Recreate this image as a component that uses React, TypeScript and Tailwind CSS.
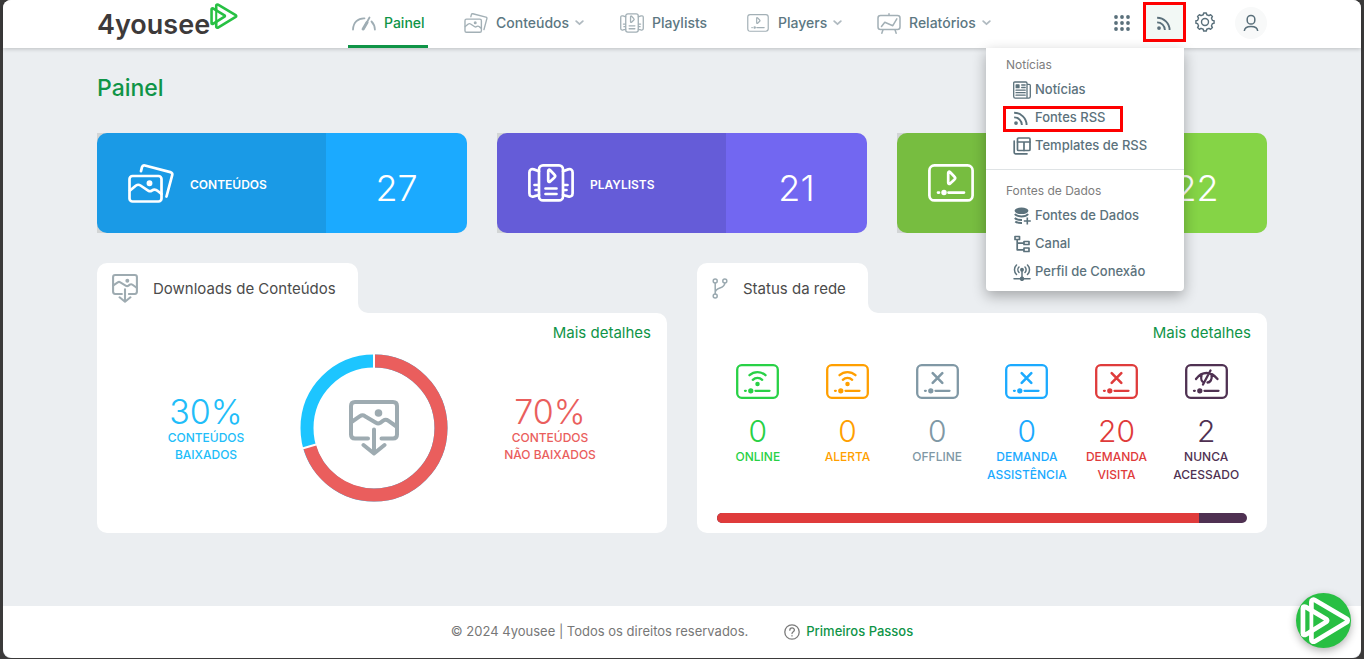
import type { ReactNode } from 'react';

type IconProps = { className?: string };

const stroke = {
  fill: 'none',
  stroke: 'currentColor',
  strokeLinecap: 'round' as const,
  strokeLinejoin: 'round' as const,
};

function PlayMark({ className }: IconProps) {
  return (
    <svg viewBox="0 0 54 50" className={className} {...stroke} strokeWidth={5} aria-hidden="true">
      <path d="M12 12.500V5c0-2 2-2.600 3.500-1.800L49.500 23.100c1.500 1 1.500 2.700 0 3.700L15.500 47.300C14 48.100 12 47.500 12 45.500V37" />
      <path d="M3 11.800v27c0 1.500 1.500 2 2.800 1.300L28 26.300c1-.7 1-1.900 0-2.600L5.800 10.500C4.500 9.800 3 10.300 3 11.800z" />
      <path d="M12 14V36" strokeWidth={4} />
    </svg>
  );
}

function GaugeIcon({ className }: IconProps) {
  return (
    <svg viewBox="0 0 24 15" className={className} {...stroke} strokeWidth={1.8} aria-hidden="true">
      <path d="M1 13.500C1.300 6.500 6 2 12.500 2.300M19.500 5.500c2 2 3.200 4.600 3.400 8M11.500 12.500L17.500 1.500" />
      <path d="M11.200 13L15 6.500" strokeWidth={3} />
    </svg>
  );
}

function PhotosIcon({ className, weight }: IconProps & { weight: number }) {
  return (
    <svg viewBox="0 0 46 39" className={className} {...stroke} strokeWidth={weight} aria-hidden="true">
      <rect x="1.500" y="12" width="32" height="25.500" rx="3" />
      <path d="M13 7.200l1-4c.4-1.500 1.500-2 2.900-1.700l25.400 6.600c1.600.4 2.300 1.500 1.900 3L38.500 32.500" />
      <path d="M2 26.500l6-5c1.500-1 3-1 4.500 0l8 5.300c1.200.7 2.200.6 3.300-.2 2-1.500 4-1.300 6 .4l3.700 3" />
      <circle cx="21.500" cy="19.200" r="1.600" fill="currentColor" />
    </svg>
  );
}

function CarouselIcon({ className, weight }: IconProps & { weight: number }) {
  return (
    <svg viewBox="0 0 46 38" className={className} {...stroke} strokeWidth={weight} aria-hidden="true">
      <rect x="11" y="1.400" width="24" height="35" rx="4" />
      <path d="M20.200 7v9.500c0 1.500 1 1.800 2 .9l4.300-4c1-1 1-1.700 0-2.700l-4.300-4.500c-1-1-2-.7-2 .8zM17.500 24.500h11M17.500 30h11" />
      <path d="M11 7.200L5.800 5.400C3 4.700 1.400 6 1.400 8.500v20.700c0 2.600 1.600 3.800 4.400 3.200L11 31M35 7.200l5.200-1.800c2.800-.7 4.400.6 4.400 3.100v20.700c0 2.600-1.600 3.800-4.400 3.200L35 31M6.500 21h4M7.500 26h3M39.500 21h-4M38.500 26h-3" />
    </svg>
  );
}

function PlayerIcon({ className, weight }: IconProps & { weight: number }) {
  return (
    <svg viewBox="0 0 46 38" className={className} {...stroke} strokeWidth={weight} aria-hidden="true">
      <rect x="1.400" y="1.400" width="43.200" height="35" rx="5" />
      <path d="M20.200 9v9.500c0 1.500 1 1.800 2 .9l4.300-4c1-1 1-1.700 0-2.700l-4.300-4.500c-1-1-2-.7-2 .8zM20.500 28.600h15.500M10 28.600h1" />
      <circle cx="16" cy="28.600" r="1.400" fill="currentColor" />
    </svg>
  );
}

function EaselIcon({ className }: IconProps) {
  return (
    <svg viewBox="0 0 24 21" className={className} {...stroke} strokeWidth={1.500} aria-hidden="true">
      <rect x="1" y="2.500" width="22" height="14" rx="2.500" />
      <path d="M12 .8v1.400M6 16.800l-1.200 3.400M18 16.800l1.200 3.400M4.500 13.500l3.300-4.300 8 3.500 4-6.800" />
    </svg>
  );
}

function Chevron() {
  return (
    <svg viewBox="0 0 9 6" className="h-1.5 w-[9px] text-[#b0bac0]" {...stroke} strokeWidth={1.800} aria-hidden="true">
      <path d="M1.200 1.200l3.300 3 3.300-3" />
    </svg>
  );
}

function RssIcon({ className }: IconProps) {
  return (
    <svg viewBox="0 0 16 16" className={className} {...stroke} strokeWidth={2} strokeLinecap="butt" aria-hidden="true">
      <path d="M1.200 1.800c7.300 0 13.300 6 13.300 13.200M1.200 6.800c4.600 0 8.300 3.600 8.300 8.200" />
      <circle cx="3.200" cy="12.900" r="2" fill="currentColor" stroke="none" />
    </svg>
  );
}

function AppsIcon() {
  const spots = [2, 8, 14];
  return (
    <svg viewBox="0 0 16 16" className="size-4" fill="currentColor" aria-hidden="true">
      {spots.map((y) => spots.map((x) => <circle key={`${x}-${y}`} cx={x} cy={y} r="1.900" />))}
    </svg>
  );
}

function GearIcon() {
  return (
    <svg viewBox="0 0 24 24" className="size-5" {...stroke} strokeWidth={1.700} aria-hidden="true">
      <path d="M9.900 3.300L10.400 1.200h3.200l.5 2.100 2.700 1.100 1.900-1.200 2.200 2.200-1.200 1.900 1.100 2.700 2.100.5v3l-2.100.5-1.100 2.700 1.200 1.900-2.200 2.200-1.900-1.200-2.700 1.100-.5 2.100h-3.200l-.5-2.100-2.700-1.100-1.900 1.200-2.200-2.200 1.200-1.900L3.200 14l-2.100-.5v-3l2.100-.5 1.100-2.700-1.200-1.900 2.200-2.200 1.900 1.200z" />
      <circle cx="12" cy="12" r="4.200" />
    </svg>
  );
}

function UserIcon() {
  return (
    <svg viewBox="0 0 16 18" className="h-[18px] w-4" {...stroke} strokeWidth={1.500} strokeLinecap="butt" aria-hidden="true">
      <rect x="4.200" y="1.400" width="7.600" height="8.600" rx="3.600" />
      <path d="M1.300 17c.2-3.200 2.500-4.600 6.700-4.600s6.500 1.400 6.700 4.600" />
    </svg>
  );
}

function NewsIcon() {
  return (
    <svg viewBox="0 0 18 18" className="size-[18px]" {...stroke} strokeWidth={1.300} aria-hidden="true">
      <path d="M14 16V2.200C14 1.400 13.600 1 12.800 1H1.800C1 1 .7 1.400.7 2.200v13.300c0 1 .6 1.700 1.600 1.700h13.500c1 0 1.500-.7 1.500-1.600V4.300c0-.7-.4-1-1.200-1H14" />
      <path d="M8.700 4h3.500M8.700 6.500h3.500M3 9.200h9.200M3 11.700h9.200M3 14.200h9.200" />
      <rect x="3.200" y="3.900" width="2.800" height="2.800" fill="currentColor" />
    </svg>
  );
}

function TemplateIcon() {
  return (
    <svg viewBox="0 0 18 18" className="size-[18px]" {...stroke} strokeWidth={1.700} aria-hidden="true">
      <rect x="4.500" y="1" width="12.500" height="12.500" rx="1" />
      <path d="M4.500 5h12.500M11 5v8.500M1.200 4v11.500c0 .8.500 1.300 1.300 1.300h11.500" />
    </svg>
  );
}

function DatabaseIcon() {
  return (
    <svg viewBox="0 0 18 18" className="size-[18px]" {...stroke} strokeWidth={2} strokeLinecap="butt" aria-hidden="true">
      <ellipse cx="8.500" cy="3.800" rx="6.900" ry="3.300" fill="currentColor" stroke="none" />
      <path d="M1.800 7.200c1.500 1.700 3.700 2.200 6.700 2.200s5.200-.5 6.700-2.200M1.800 11c1.500 1.500 3.700 2 7.200 1.900M2.300 14.500c1.500 1.200 3.500 1.700 6.700 1.600" />
      <path d="M10.800 14h7M14.300 10.500v7" strokeWidth={1.600} />
    </svg>
  );
}

function TreeIcon() {
  return (
    <svg viewBox="0 0 18 18" className="size-[18px]" {...stroke} strokeWidth={1.700} aria-hidden="true">
      <path d="M2 1.500h4.500v3H2zM11 6.500h5v3h-5zM11 13h5v3.500h-5zM4.200 4.500v10.300H11M4.200 8.200H11" />
    </svg>
  );
}

function AntennaIcon() {
  return (
    <svg viewBox="0 0 18 18" className="size-[18px]" {...stroke} strokeWidth={1.500} aria-hidden="true">
      <path d="M3.500 2C.8 4.500.8 9 3.500 11.500M14.500 2c2.700 2.500 2.700 7 0 9.500M6 4c-1.500 1.500-1.500 4 0 5.500M12 4c1.500 1.500 1.500 4 0 5.500M9 8v7M1 15.800h16" />
      <circle cx="9" cy="6.700" r="1.200" fill="currentColor" />
      <circle cx="9" cy="15.800" r="1.500" fill="currentColor" />
    </svg>
  );
}

function DownloadImageIcon({ className }: IconProps) {
  return (
    <svg viewBox="0 0 50 56" className={className} {...stroke} strokeWidth={4} aria-hidden="true">
      <path d="M19 38.500H6c-2.700 0-4-1.300-4-4V6c0-2.700 1.300-4 4-4h38c2.700 0 4 1.300 4 4v28.500c0 2.700-1.300 4-4 4H32.500" />
      <path d="M2.500 22l8.500-5.800c1.700-1.200 3.300-1.200 5 0L27 22.800c1.500.9 2.700.9 4.200 0l3-2.200c1.800-1.200 3.500-1.100 5.300.2l8 5.700" />
      <circle cx="29.500" cy="13" r="1.800" fill="currentColor" />
      <path d="M25 29.500v23M14.500 45L25 53.500 35.500 45" />
    </svg>
  );
}

function BranchIcon() {
  return (
    <svg viewBox="0 0 16 21" className="h-[21px] w-4 text-[#9aa9b0]" {...stroke} strokeWidth={1.500} aria-hidden="true">
      <circle cx="3.200" cy="3" r="2" />
      <circle cx="12.800" cy="3" r="2" />
      <circle cx="3.200" cy="18" r="2" />
      <path d="M3.200 5v11M12.800 5c0 6.500-9.600 3.500-9.600 9.500" />
    </svg>
  );
}

type Signal = 'wifi' | 'cross' | 'hidden';

function DeviceIcon({ signal }: { signal: Signal }) {
  return (
    <svg viewBox="0 0 43 35" className="h-[35px] w-[43px]" {...stroke} strokeWidth={2.300} aria-hidden="true">
      <rect x="1.200" y="1.200" width="40.600" height="32.600" rx="4.500" />
      <path d="M9 26.800h.8M19.500 26.800h14" />
      <circle cx="14.800" cy="26.800" r="1.500" fill="currentColor" />
      {signal === 'wifi' && (
        <>
          <path d="M13.500 11.200c4.500-4.200 11.500-4.200 16 0M16.800 15.800c2.600-2.500 6.800-2.500 9.400 0" />
          <circle cx="21.500" cy="20" r="1.100" fill="currentColor" />
        </>
      )}
      {signal === 'cross' && <path d="M16.700 9.200l9.600 9.600M26.300 9.200l-9.600 9.600" strokeWidth={2.600} />}
      {signal === 'hidden' && <path d="M11 15c6-8 15-8 21.500 0M25.500 6.500L18 20.500M16.500 11.500c-1 4 .5 6.500 2.500 7M26.500 11.500c1 4-1.500 7-4 7" />}
    </svg>
  );
}

function HelpIcon() {
  return (
    <svg viewBox="0 0 16 16" className="size-4 text-[#7b7b7b]" {...stroke} strokeWidth={1.300} aria-hidden="true">
      <circle cx="8" cy="8" r="7.200" />
      <path d="M5.800 6.200c0-3 4.600-2.900 4.600-.2C10.400 7.700 8 7.700 8 9.500M8 11.700v.2" />
    </svg>
  );
}

const navItems: { label: string; icon: ReactNode; menu?: boolean }[] = [
  { label: 'Conteúdos', icon: <PhotosIcon className="h-5 w-6" weight={2.700} />, menu: true },
  { label: 'Playlists', icon: <CarouselIcon className="h-5 w-6" weight={2.500} /> },
  { label: 'Players', icon: <PlayerIcon className="h-[18px] w-6" weight={2.500} />, menu: true },
  { label: 'Relatórios', icon: <EaselIcon className="h-[21px] w-6" />, menu: true },
];

const menuGroups: { title: string; items: { label: string; icon: ReactNode; marked?: boolean }[] }[] = [
  {
    title: 'Notícias',
    items: [
      { label: 'Notícias', icon: <NewsIcon /> },
      { label: 'Fontes RSS', icon: <RssIcon className="size-[15px]" />, marked: true },
      { label: 'Templates de RSS', icon: <TemplateIcon /> },
    ],
  },
  {
    title: 'Fontes de Dados',
    items: [
      { label: 'Fontes de Dados', icon: <DatabaseIcon /> },
      { label: 'Canal', icon: <TreeIcon /> },
      { label: 'Perfil de Conexão', icon: <AntennaIcon /> },
    ],
  },
];

const summary = [
  { label: 'CONTEÚDOS', value: 27, left: 'bg-[#1a9ae6]', right: 'bg-[#1baaff]', icon: <PhotosIcon className="h-[39px] w-[46px]" weight={2.700} /> },
  { label: 'PLAYLISTS', value: 21, left: 'bg-[#655cd8]', right: 'bg-[#7267f1]', icon: <CarouselIcon className="h-[38px] w-[46px]" weight={2.700} /> },
  { label: 'PLAYERS', value: 22, left: 'bg-[#77bd40]', right: 'bg-[#85d446]', icon: <PlayerIcon className="h-[38px] w-[46px]" weight={2.700} /> },
];

const network: { label: string; value: number; color: string; signal: Signal }[] = [
  { label: 'ONLINE', value: 0, color: 'text-[#28d146]', signal: 'wifi' },
  { label: 'ALERTA', value: 0, color: 'text-[#ff9f00]', signal: 'wifi' },
  { label: 'OFFLINE', value: 0, color: 'text-[#8098a5]', signal: 'cross' },
  { label: 'DEMANDA ASSISTÊNCIA', value: 0, color: 'text-[#1baaff]', signal: 'cross' },
  { label: 'DEMANDA VISITA', value: 20, color: 'text-[#df3b3b]', signal: 'cross' },
  { label: 'NUNCA ACESSADO', value: 2, color: 'text-[#4f3152]', signal: 'hidden' },
];

function RssMenu() {
  return (
    <div className="absolute top-full right-0.5 z-20 w-[198px] rounded-b bg-white pt-1.5 pb-[5px] shadow-[0_5px_14px_rgba(0,0,0,0.3)]">
      {menuGroups.map((group, i) => (
        <section key={group.title} className={i > 0 ? 'mt-[9px] border-t border-[#dfe3e5] pt-2.5' : ''}>
          <h2 className="h-[22px] px-5 text-xs leading-[22px] text-[#7d7d7d]">{group.title}</h2>
          <ul>
            {group.items.map((item) => (
              <li key={item.label} className="relative">
                <a href="#" className="flex h-7 items-center gap-1 pl-[27px] text-[13px] font-medium whitespace-nowrap text-[#5c727c]">
                  <span className="w-[18px] shrink-0">{item.icon}</span>
                  {item.label}
                </a>
                {item.marked && <span className="pointer-events-none absolute top-0.5 left-[17px] h-[26px] w-[120px] border-3 border-[#fe0000]" />}
              </li>
            ))}
          </ul>
        </section>
      ))}
    </div>
  );
}

function Header() {
  return (
    <header className="relative z-10 rounded-t-lg bg-white shadow-[0_1px_4px_rgba(0,0,0,0.2)]">
      <div className="mx-auto flex h-12 w-full max-w-[1170px]">
        <a href="#" className="flex w-[251px] shrink-0 items-start text-[27px] leading-[50px] font-semibold text-[#3d3a3a]">
          4yousee
          <PlayMark className="mt-[3px] h-[26px] w-7 text-[#27c043]" />
        </a>
        <nav className="grid grid-cols-[112px_156px_126px_131px_auto] text-sm font-medium">
          <a href="#" aria-current="page" className="flex w-20 items-center gap-2 border-b-3 border-[#0f9447] pt-px pl-1 text-[#0f9447]">
            <GaugeIcon className="h-[15px] w-6 shrink-0 text-[#9fadb4]" />
            Painel
          </a>
          {navItems.map((item) => (
            <a key={item.label} href="#" className="flex items-center gap-2 pb-0.5 pl-1 text-[#5c7782]">
              <span className="shrink-0 text-[#a3b0b6]">{item.icon}</span>
              <span className="flex items-center gap-1.5">
                {item.label}
                {item.menu && <Chevron />}
              </span>
            </a>
          ))}
        </nav>
        <div className="ml-auto flex items-center pb-1 text-[#5a707b]">
          <button type="button" aria-label="Aplicativos" className="mr-[13px] pt-0.5">
            <AppsIcon />
          </button>
          <div className="relative -mb-1 h-12 pt-0.5">
            <button type="button" aria-label="RSS" aria-expanded="true" className="flex h-10 w-[43px] items-center justify-center border-3 border-[#fe0000] bg-[#f2f8f5] pr-0.5 pt-0.5">
              <RssIcon className="size-[15px]" />
            </button>
            <RssMenu />
          </div>
          <button type="button" aria-label="Configurações" className="ml-[9px]">
            <GearIcon />
          </button>
          <button type="button" aria-label="Conta" className="mt-0.5 ml-5 flex size-8 items-center justify-center rounded-full bg-[#f8f9f9]">
            <UserIcon />
          </button>
        </div>
      </div>
    </header>
  );
}

function Panel({ title, icon, children }: { title: string; icon: ReactNode; children: ReactNode }) {
  return (
    <section className="flex flex-col">
      <div className="relative flex h-[50px] items-center self-start rounded-t-[10px] bg-white pr-[22px] pl-[15px]">
        {icon}
        <h2 className="pt-0.5 text-[15px] whitespace-nowrap text-[#4b4b4b]">{title}</h2>
        <span className="absolute bottom-0 left-full size-2.5 bg-white">
          <span className="block size-full rounded-bl-[10px] bg-[#ebeef1]" />
        </span>
      </div>
      <div className="flex min-h-[220px] grow flex-col rounded-[10px] rounded-tl-none bg-white px-4 pt-2.5 pb-2.5">
        <a href="#" className="self-end text-[15px] leading-5 text-[#0f9447]">
          Mais detalhes
        </a>
        {children}
      </div>
    </section>
  );
}

function Donut() {
  const radius = 67;
  const length = 2 * Math.PI * radius;
  const pending = length * 0.706;
  return (
    <svg viewBox="0 0 148 148" className="size-full" fill="none" strokeWidth={13} aria-hidden="true">
      <g transform="rotate(-90 74 74)">
        <circle cx="74" cy="74" r={radius} stroke="#1dc5ff" />
        <circle cx="74" cy="74" r={radius} stroke="#ea5e5d" strokeDasharray={`${pending} ${length}`} />
      </g>
      <path d="M74 0v15M16 90.500L1.500 94.700" stroke="#fff" strokeWidth={2} />
    </svg>
  );
}

function Share({ value, lines, className }: { value: string; lines: string[]; className: string }) {
  return (
    <div className={`text-center text-xs leading-[17px] font-medium ${className}`}>
      <p className="pt-0.5 text-[34px] leading-[34px] font-light">{value}</p>
      {lines.map((line) => (
        <p key={line}>{line}</p>
      ))}
    </div>
  );
}

export default function App() {
  return (
    <div className="flex min-h-screen flex-col bg-[#3b3a3a] px-[3px] pb-px font-[Inter,'Noto_Sans',sans-serif]">
      <div className="flex grow flex-col rounded-lg bg-[#ebeef1]">
        <Header />
        <main className="mx-auto w-full max-w-[1170px] grow pb-[73px]">
          <h1 className="pt-6 text-[23px] leading-8 font-medium text-[#0f9447]">Painel</h1>

          <div className="mt-[29px] grid grid-cols-3 gap-[30px]">
            {summary.map((card) => (
              <div key={card.label} className="rounded-r-[10px] bg-[#d2d5d6]">
                <a href="#" className="flex h-[100px] overflow-hidden rounded-[10px] text-white">
                  <span className={`flex w-[229px] items-center gap-4 pl-[31px] text-xs font-semibold ${card.left}`}>
                    {card.icon}
                    <span className="pt-1">{card.label}</span>
                  </span>
                  <span className={`flex grow items-center justify-center pt-2.5 text-[36px] leading-10 font-light ${card.right}`}>{card.value}</span>
                </a>
              </div>
            ))}
          </div>

          <div className="mt-[30px] grid grid-cols-2 gap-[30px]">
            <Panel title="Downloads de Conteúdos" icon={<DownloadImageIcon className="mr-[15px] h-[29px] w-[26px] text-[#9eabb1]" />}>
              <div className="mt-[11px] flex items-center justify-center gap-[46px]">
                <Share value="30%" lines={['CONTEÚDOS', 'BAIXADOS']} className="w-24 text-[#21bdf9]" />
                <div className="relative size-[148px] shrink-0">
                  <Donut />
                  <div className="absolute inset-0 flex items-center justify-center">
                    <DownloadImageIcon className="h-14 w-[50px] text-[#9eabb1]" />
                  </div>
                </div>
                <Share value="70%" lines={['CONTEÚDOS', 'NÃO BAIXADOS']} className="w-28 text-[#ea5e5d]" />
              </div>
            </Panel>

            <Panel
              title="Status da rede"
              icon={
                <span className="mr-[15px]">
                  <BranchIcon />
                </span>
              }
            >
              <ul className="mt-[21px] grid grid-cols-6">
                {network.map((item) => (
                  <li key={item.label} className={`flex flex-col items-center text-center ${item.color}`}>
                    <DeviceIcon signal={item.signal} />
                    <span className="mt-4 text-[30px] leading-8 font-light">{item.value}</span>
                    <span className="mt-px text-xs leading-[18px] font-medium">{item.label}</span>
                  </li>
                ))}
              </ul>
              <div className="mx-1 mt-auto flex h-2.5 overflow-hidden rounded-full bg-[#4f3152]">
                <span className="w-10/11 bg-[#df3b3b]" />
              </div>
            </Panel>
          </div>
        </main>

        <footer className="relative flex h-[52px] items-center justify-center gap-9 rounded-b-[10px] bg-white text-[13px] text-[#777]">
          <p>© 2024 4yousee | Todos os direitos reservados.</p>
          <a href="#" className="flex items-center gap-1.5 font-medium text-[#0f9447]">
            <HelpIcon />
            Primeiros Passos
          </a>
          <button
            type="button"
            aria-label="Ajuda"
            className="absolute right-2.5 bottom-2.5 flex size-[55px] items-center justify-center rounded-full bg-[#28bf43] pl-1 text-white shadow-[0_3px_8px_rgba(0,0,0,0.3)]"
          >
            <PlayMark className="h-[47px] w-[51px]" />
          </button>
        </footer>
      </div>
    </div>
  );
}
